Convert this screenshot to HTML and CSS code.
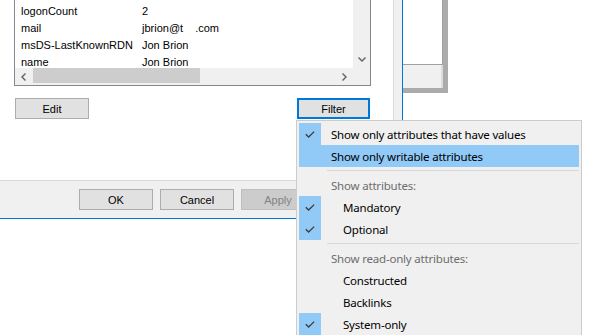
FILE: index.html
```html
<!DOCTYPE html>
<html lang="en">
<head>
    <meta charset="UTF-8">
    <title>Attribute Editor</title>
    <link rel="stylesheet" href="styles.css">
</head>
<body>
    <div class="desktop">
        <div class="dialog">
            <div class="tab-page">
                <div class="attr-list">
                    <div class="attr-rows">
                        <div class="attr-row"><span class="attr-name">logonCount</span><span>2</span></div>
                        <div class="attr-row"><span class="attr-name">mail</span><span>jbrion@t</span><span class="redacted">.com</span></div>
                        <div class="attr-row"><span class="attr-name">msDS-LastKnownRDN</span><span>Jon Brion</span></div>
                        <div class="attr-row"><span class="attr-name">name</span><span>Jon Brion</span></div>
                    </div>
                    <div class="vscroll">
                        <span class="scroll-btn">
                            <svg width="8" height="5" viewBox="0 0 8 5"><path d="M0.5 0.5 L4 4 L7.5 0.5" fill="none" stroke="#606060" stroke-width="1.4"/></svg>
                        </span>
                    </div>
                    <div class="hscroll">
                        <span class="scroll-btn">
                            <svg width="5" height="8" viewBox="0 0 5 8"><path d="M4.5 0.5 L1 4 L4.5 7.5" fill="none" stroke="#606060" stroke-width="1.4"/></svg>
                        </span>
                        <span class="hs-thumb"></span>
                        <span class="hs-track"></span>
                        <span class="scroll-btn">
                            <svg width="5" height="8" viewBox="0 0 5 8"><path d="M0.5 0.5 L4 4 L0.5 7.5" fill="none" stroke="#606060" stroke-width="1.4"/></svg>
                        </span>
                    </div>
                    <div class="corner"></div>
                </div>
                <div class="list-buttons">
                    <button class="btn">Edit</button>
                    <button class="btn btn-default">Filter</button>
                </div>
            </div>
            <div class="dialog-buttons">
                <button class="btn">OK</button>
                <button class="btn">Cancel</button>
                <button class="btn btn-disabled">Apply</button>
            </div>
        </div>

        <div class="back-window">
            <div class="bw-view"></div>
            <div class="bw-bar"></div>
        </div>
    </div>

    <!-- filter popup menu -->
    <div class="context-menu">
        <div class="menu-item checked">
            <span class="menu-check"><svg width="10" height="7" viewBox="0 0 10 7"><path d="M0.8 3.2 L3.6 6 L9.2 0.6" fill="none" stroke="#3c3c3c" stroke-width="1.3"/></svg></span>
            <span class="menu-label">Show only attributes that have values</span>
        </div>
        <div class="menu-item hover">
            <span class="menu-check"></span>
            <span class="menu-label">Show only writable attributes</span>
        </div>
        <div class="menu-sep"></div>
        <div class="menu-item menu-header">
            <span class="menu-check"></span>
            <span class="menu-label">Show attributes:</span>
        </div>
        <div class="menu-item sub checked">
            <span class="menu-check"><svg width="10" height="7" viewBox="0 0 10 7"><path d="M0.8 3.2 L3.6 6 L9.2 0.6" fill="none" stroke="#3c3c3c" stroke-width="1.3"/></svg></span>
            <span class="menu-label">Mandatory</span>
        </div>
        <div class="menu-item sub checked">
            <span class="menu-check"><svg width="10" height="7" viewBox="0 0 10 7"><path d="M0.8 3.2 L3.6 6 L9.2 0.6" fill="none" stroke="#3c3c3c" stroke-width="1.3"/></svg></span>
            <span class="menu-label">Optional</span>
        </div>
        <div class="menu-sep"></div>
        <div class="menu-item menu-header">
            <span class="menu-check"></span>
            <span class="menu-label">Show read-only attributes:</span>
        </div>
        <div class="menu-item sub">
            <span class="menu-check"></span>
            <span class="menu-label">Constructed</span>
        </div>
        <div class="menu-item sub">
            <span class="menu-check"></span>
            <span class="menu-label">Backlinks</span>
        </div>
        <div class="menu-item sub checked">
            <span class="menu-check"><svg width="10" height="7" viewBox="0 0 10 7"><path d="M0.8 3.2 L3.6 6 L9.2 0.6" fill="none" stroke="#3c3c3c" stroke-width="1.3"/></svg></span>
            <span class="menu-label">System-only</span>
        </div>
    </div>
</body>
</html>
```

FILE: styles.css
```css
* {
    box-sizing: border-box;
}

body {
    margin: 0;
    background: #fff;
    font-family: "Liberation Sans", Arial, sans-serif;
    font-size: 11px;
    color: #000;
    overflow: hidden;
}

.desktop {
    display: flex;
    align-items: flex-start;
}

.dialog {
    width: 403px;
    background: #f0f0f0;
    border-right: 1px solid #0078d7;
    border-bottom: 1px solid #0078d7;
}

.tab-page {
    width: 394px;
    height: 181px;
    padding-left: 14px;
    background: #fff;
    border-right: 1px solid #d9d9d9;
    border-bottom: 1px solid #d9d9d9;
}

.attr-list {
    width: 357px;
    height: 86px;
    border: 1px solid #828790;
    border-top: none;
    display: grid;
    grid-template-columns: 1fr 17px;
    grid-template-rows: 68px 17px;
}

.attr-rows {
    padding: 3px 0 0 6px;
    overflow: hidden;
    background: #fff;
}

.attr-row {
    display: flex;
    height: 17px;
    line-height: 17px;
    white-space: nowrap;
}

.attr-name {
    width: 121px;
}

.redacted {
    margin-left: 12px;
}

.vscroll {
    background: #f0f0f0;
    display: flex;
    flex-direction: column;
    justify-content: flex-end;
}

.scroll-btn {
    width: 17px;
    height: 17px;
    display: flex;
    align-items: center;
    justify-content: center;
    flex: none;
}

.hscroll {
    background: #f0f0f0;
    display: flex;
}

.hs-thumb {
    width: 167px;
    height: 15px;
    margin-left: 1px;
    background: #cdcdcd;
}

.hs-track {
    flex: 1;
}

.corner {
    background: #f0f0f0;
}

.list-buttons {
    width: 356px;
    margin-top: 12px;
    padding-left: 1px;
    display: flex;
    justify-content: space-between;
}

.btn {
    width: 74px;
    height: 21px;
    padding: 0;
    background: #e1e1e1;
    border: 1px solid #adadad;
    font-family: "Liberation Sans", Arial, sans-serif;
    font-size: 11px;
    color: #000;
}

.btn-default {
    width: 73px;
    border: 2px solid #0078d7;
}

.btn-disabled {
    background: #cccccc;
    border-color: #bfbfbf;
    color: #838383;
}

.dialog-buttons {
    height: 37px;
    padding: 8px 0 0 79px;
    display: flex;
    gap: 7px;
}

.back-window {
    width: 45px;
    height: 93px;
    border-right: 5px solid #ababab;
    border-bottom: 5px solid #ababab;
}

.bw-view {
    height: 65px;
    background: #fff;
    border-right: 1px solid #a0a0a0;
    border-bottom: 1px solid #a0a0a0;
}

.bw-bar {
    height: 23px;
    background: #f0f0f0;
    border-right: 2px solid #dcdcdc;
}

.context-menu {
    position: absolute;
    left: 296px;
    top: 120px;
    width: 286px;
    padding: 2px;
    background: #f0f0f0;
    border: 1px solid #cccccc;
    font-family: "Noto Sans", "Open Sans", sans-serif;
    font-size: 11.5px;
    letter-spacing: -0.2px;
}

.menu-item {
    display: flex;
    align-items: center;
    height: 22px;
    white-space: nowrap;
}

.menu-item.hover {
    background: #91c9f7;
}

.menu-check {
    width: 22px;
    height: 22px;
    flex: none;
    display: flex;
    align-items: center;
    justify-content: center;
}

.menu-item.checked .menu-check {
    background: #91c9f7;
}

.menu-label {
    padding-left: 10px;
}

.menu-item.sub .menu-label {
    padding-left: 22px;
}

.menu-header .menu-label {
    color: #6d6d6d;
}

.menu-sep {
    height: 1px;
    margin: 3px 0 3px 28px;
    background: #d7d7d7;
}
```
